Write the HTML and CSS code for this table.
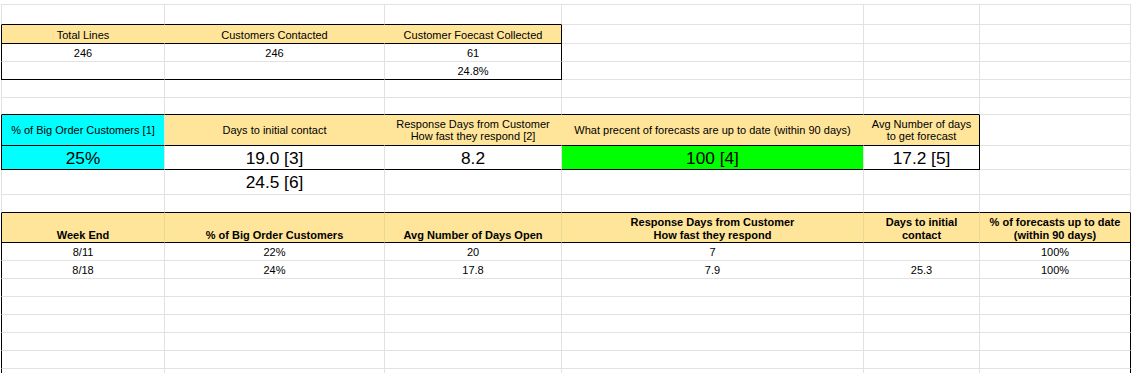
FILE: index.html
```html
<!DOCTYPE html>
<html lang="en">
<head>
<meta charset="utf-8">
<title>Forecast Summary</title>
<link rel="stylesheet" href="styles.css">
</head>
<body>
<div class="sheet">
  <!-- row 1 -->
  <div class="c kb"></div><div class="c kb"></div><div class="c kb"></div><div class="c"></div><div class="c"></div><div class="c"></div>
  <!-- row 2 -->
  <div class="c hd kl kb">Total Lines</div>
  <div class="c hd kb">Customers Contacted</div>
  <div class="c hd kb kr">Customer Foecast Collected</div>
  <div class="c"></div><div class="c"></div><div class="c"></div>
  <!-- row 3 -->
  <div class="c kl">246</div>
  <div class="c">246</div>
  <div class="c kr">61</div>
  <div class="c"></div><div class="c"></div><div class="c"></div>
  <!-- row 4 -->
  <div class="c kl kb"></div>
  <div class="c kb"></div>
  <div class="c kb kr">24.8%</div>
  <div class="c"></div><div class="c"></div><div class="c"></div>
  <!-- row 5 -->
  <div class="c"></div><div class="c"></div><div class="c"></div><div class="c"></div><div class="c"></div><div class="c"></div>
  <!-- row 6 -->
  <div class="c kb"></div><div class="c kb"></div><div class="c kb"></div><div class="c kb"></div><div class="c kb"></div><div class="c"></div>
  <!-- row 7 -->
  <div class="c cy mid kl kb">% of Big Order Customers [1]</div>
  <div class="c hd mid kb">Days to initial contact</div>
  <div class="c hd mid kb">Response Days from Customer<br>How fast they respond [2]</div>
  <div class="c hd mid kb">What precent of forecasts are up to date (within 90 days)</div>
  <div class="c hd mid kb kr">Avg Number of days<br>to get forecast</div>
  <div class="c"></div>
  <!-- row 8 -->
  <div class="c cy big kl kb">25%</div>
  <div class="c big kb">19.0 [3]</div>
  <div class="c big kb">8.2</div>
  <div class="c gr big kb">100 [4]</div>
  <div class="c big kb kr">17.2 [5]</div>
  <div class="c"></div>
  <!-- row 9 -->
  <div class="c"></div>
  <div class="c big">24.5 [6]</div>
  <div class="c"></div><div class="c"></div><div class="c"></div><div class="c"></div>
  <!-- row 10 -->
  <div class="c kb"></div><div class="c kb"></div><div class="c kb"></div><div class="c kb"></div><div class="c kb"></div><div class="c kb"></div>
  <!-- row 11 -->
  <div class="c hd2 kl kb">Week End</div>
  <div class="c hd2 kb">% of Big Order Customers</div>
  <div class="c hd2 kb">Avg Number of Days Open</div>
  <div class="c hd2 kb">Response Days from Customer<br>How fast they respond</div>
  <div class="c hd2 kb">Days to initial<br>contact</div>
  <div class="c hd2 kb kr">% of forecasts up to date<br>(within 90 days)</div>
  <!-- row 12 -->
  <div class="c kl">8/11</div>
  <div class="c">22%</div>
  <div class="c">20</div>
  <div class="c">7</div>
  <div class="c"></div>
  <div class="c kr">100%</div>
  <!-- row 13 -->
  <div class="c kl">8/18</div>
  <div class="c">24%</div>
  <div class="c">17.8</div>
  <div class="c">7.9</div>
  <div class="c">25.3</div>
  <div class="c kr">100%</div>
  <!-- rows 14-19 -->
  <div class="c kl"></div><div class="c"></div><div class="c"></div><div class="c"></div><div class="c"></div><div class="c kr"></div>
  <div class="c kl"></div><div class="c"></div><div class="c"></div><div class="c"></div><div class="c"></div><div class="c kr"></div>
  <div class="c kl"></div><div class="c"></div><div class="c"></div><div class="c"></div><div class="c"></div><div class="c kr"></div>
  <div class="c kl"></div><div class="c"></div><div class="c"></div><div class="c"></div><div class="c"></div><div class="c kr"></div>
  <div class="c kl"></div><div class="c"></div><div class="c"></div><div class="c"></div><div class="c"></div><div class="c kr"></div>
  <div class="c kl"></div><div class="c"></div><div class="c"></div><div class="c"></div><div class="c"></div><div class="c kr"></div>
</div>
</body>
</html>
```

FILE: styles.css
```css
* {
  box-sizing: border-box;
}

html,
body {
  margin: 0;
  background: #ffffff;
  overflow: hidden;
}

body {
  font-family: "Liberation Sans", Arial, sans-serif;
  font-size: 11px;
  color: #000000;
}

.sheet {
  display: grid;
  grid-template-columns: 164px 220px 177px 302px 116px 151px;
  grid-template-rows: 21px 19px 18px 18px 18px 17px 31px 24px 25px 18px 30px repeat(8, 18px);
  padding: 4px 0 0 1px;
  width: max-content;
}

.c {
  display: flex;
  align-items: flex-end;
  justify-content: center;
  text-align: center;
  line-height: 13px;
  padding: 0 3px 1px;
  white-space: nowrap;
  border-right: 1px solid #e2e2e2;
  border-bottom: 1px solid #e2e2e2;
}

.c:nth-child(6n+1) {
  border-left: 1px solid #e2e2e2;
}

.c:nth-child(-n+6) {
  border-top: 1px solid #e2e2e2;
}

.hd {
  background: #ffe599;
  border-right-color: transparent;
}

.hd2 {
  background: #ffe599;
  border-right-color: #e8d795;
  font-weight: bold;
  font-size: 11px;
  line-height: 12.5px;
}

.cy {
  background: #00ffff;
}

.gr {
  background: #00ff00;
}

.mid {
  align-items: center;
  line-height: 12.5px;
  padding-bottom: 0;
}

.big {
  align-items: center;
  font-size: 17.3px;
  line-height: 20px;
  padding-bottom: 0;
}

.c.kb {
  border-bottom-color: #000000;
}

.c.kl {
  border-left: 1px solid #000000;
}

.c.kr {
  border-right-color: #000000;
}
```
